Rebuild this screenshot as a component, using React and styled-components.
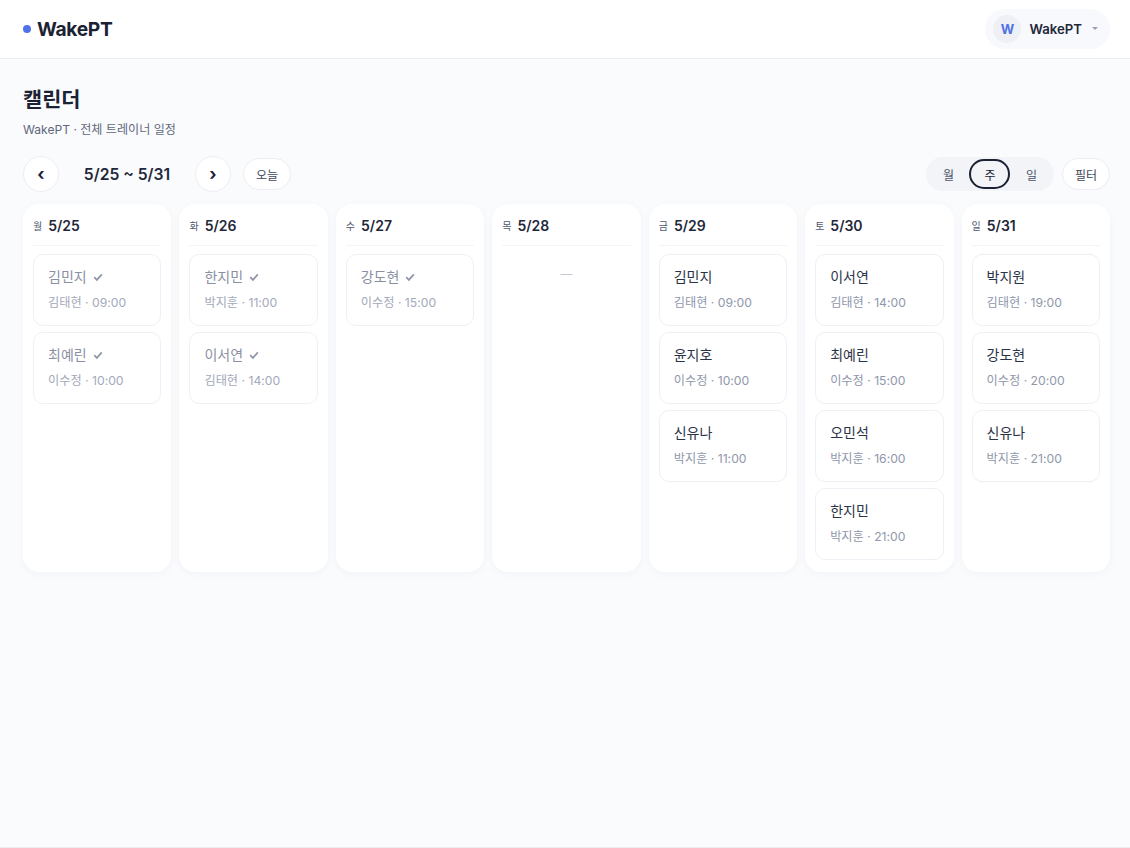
import React from "react";
import styled, { createGlobalStyle } from "styled-components";

const Global = createGlobalStyle`
  html, body { margin: 0; padding: 0; background: #fafbfd; }
  body { font-family: Inter, "Noto Sans CJK KR", sans-serif; color: #1a2233; }
  * { box-sizing: border-box; }
`;
const Page = styled.div`
  height: 848px; display: flex; flex-direction: column; background: #fafbfd;
  border-bottom: 1px solid #eceef3;
`;
const Header = styled.header`
  height: 59px; flex: none; background: #fff; border-bottom: 1px solid #eceef3;
  display: flex; align-items: center; justify-content: space-between; padding: 0 20px 0 23px;
`;
const Logo = styled.div`display: flex; align-items: center; gap: 6px; font-size: 19.2px; font-weight: 700; letter-spacing: -0.3px; color: #1a2233;`;
const Dot = styled.span`width: 8px; height: 8px; border-radius: 50%; background: #5073ea;`;
const User = styled.div`
  height: 40px; margin-top: -1px; padding: 0 12px 0 8px; border-radius: 20px; background: #f8f9fc;
  display: flex; align-items: center; gap: 8px; font-size: 13.2px; font-weight: 600; color: #1f283a;
`;
const Avatar = styled.span`
  width: 28px; height: 28px; border-radius: 50%; background: #eef0f6; color: #4f72e3;
  display: flex; align-items: center; justify-content: center; font-size: 13px; font-weight: 700;
`;
const Caret = styled.span`
  width: 0; height: 0; margin-left: 2px; border-left: 3px solid transparent; border-right: 3px solid transparent;
  border-top: 3px solid #9aa1b2;
`;
const Main = styled.main`flex: 1; padding: 25px 20px 0 23px;`;
const Title = styled.h1`margin: 0; font-size: 20.8px; line-height: 32px; font-weight: 700; color: #1a2233;`;
const Sub = styled.p`margin: 6px 0 0; font-size: 12.08px; line-height: 16px; color: #5f687c;`;
const Toolbar = styled.div`display: flex; align-items: center; justify-content: space-between; margin-top: 18px; height: 36px;`;
const Group = styled.div`display: flex; align-items: center;`;
const RoundBtn = styled.button`
  width: 36px; height: 36px; border-radius: 50%; border: 1px solid #eceef4; background: #fff; padding: 0;
  font: 700 17px Inter, sans-serif; color: #1a2233; display: flex; align-items: center; justify-content: center;
`;
const Range = styled.div`width: 136px; text-align: center; font-size: 15.7px; font-weight: 600; color: #1f283a;`;
const Pill = styled.button`
  height: 32px; padding: 0 12px; border-radius: 16px; border: 1px solid #eceef4; background: #fff;
  font: 400 12px Inter, "Noto Sans CJK KR", sans-serif; color: #3f485c; margin-left: ${p => p.$ml || 0}px;
`;
const Segment = styled.div`
  height: 34px; border-radius: 17px; background: #f2f4f8; padding: 2px 2px; display: flex; align-items: center; width: 128px;
  justify-content: space-between;
`;
const SegItem = styled.button`
  width: 41px; height: 30px; border-radius: 15px; background: transparent; padding: 0;
  border: ${p => p.$active ? "2px solid #1a2233" : "0"};
  font: 400 12px Inter, "Noto Sans CJK KR", sans-serif; color: ${p => p.$active ? "#1a2233" : "#4b5468"};
`;
const Grid = styled.div`display: grid; grid-template-columns: repeat(7, 1fr); gap: 8px; margin-top: 12px;`;
const Col = styled.section`
  background: #fff; border-radius: 16px; height: 368px; padding: 10px 10px 0;
  box-shadow: 0 2px 8px rgba(30, 40, 90, 0.035);
`;
const ColHead = styled.div`
  display: flex; align-items: center; gap: 6px; height: 32px; border-bottom: 1px solid #f3f4f8;
  margin-bottom: 8px; padding-bottom: 9px;
`;
const Dow = styled.span`font-size: 10px; font-weight: 400; color: #4f586c;`;
const DateText = styled.span`font-size: 14px; font-weight: 600; color: #1f283a;`;
const Card = styled.div`
  height: 72px; border: 1px solid #eef0f5; border-radius: 10px; background: #fff; padding: 0 14px 1px;
  margin-bottom: 6px; display: flex; flex-direction: column; justify-content: center; gap: 7px;
`;
const Name = styled.div`
  display: flex; align-items: center; gap: 6px; font-size: 14px; line-height: 20px; font-weight: 400;
  color: ${p => p.$done ? "#8a90a3" : "#2b3447"};
`;
const Meta = styled.div`font-size: 12.2px; line-height: 18px; color: ${p => p.$done ? "#a3a9bb" : "#9097ab"};`;
const Empty = styled.div`text-align: center; color: #c5c9d4; font-size: 12px; padding-top: 10px; line-height: 20px;`;

const Check = () => (
  <svg width="10" height="10" viewBox="0 0 10 10" fill="none" stroke="#8f95a8" strokeWidth="1.7">
    <path d="M1.2 5.2 L3.9 7.9 L8.8 2.4" />
  </svg>
);

const days = [
  ["월", "5/25", [["김민지", "김태현 · 09:00", 1], ["최예린", "이수정 · 10:00", 1]]],
  ["화", "5/26", [["한지민", "박지훈 · 11:00", 1], ["이서연", "김태현 · 14:00", 1]]],
  ["수", "5/27", [["강도현", "이수정 · 15:00", 1]]],
  ["목", "5/28", []],
  ["금", "5/29", [["김민지", "김태현 · 09:00"], ["윤지호", "이수정 · 10:00"], ["신유나", "박지훈 · 11:00"]]],
  ["토", "5/30", [["이서연", "김태현 · 14:00"], ["최예린", "이수정 · 15:00"], ["오민석", "박지훈 · 16:00"], ["한지민", "박지훈 · 21:00"]]],
  ["일", "5/31", [["박지원", "김태현 · 19:00"], ["강도현", "이수정 · 20:00"], ["신유나", "박지훈 · 21:00"]]],
];

export default function App() {
  return (
    <Page>
      <Global />
      <Header>
        <Logo><Dot />WakePT</Logo>
        <User><Avatar>W</Avatar>WakePT<Caret /></User>
      </Header>
      <Main>
        <Title>캘린더</Title>
        <Sub>WakePT · 전체 트레이너 일정</Sub>
        <Toolbar>
          <Group>
            <RoundBtn>‹</RoundBtn>
            <Range>5/25 ~ 5/31</Range>
            <RoundBtn>›</RoundBtn>
            <Pill $ml={12}>오늘</Pill>
          </Group>
          <Group>
            <Segment>
              <SegItem>월</SegItem>
              <SegItem $active>주</SegItem>
              <SegItem>일</SegItem>
            </Segment>
            <Pill $ml={8}>필터</Pill>
          </Group>
        </Toolbar>
        <Grid>
          {days.map(([d, date, items]) => (
            <Col key={date}>
              <ColHead><Dow>{d}</Dow><DateText>{date}</DateText></ColHead>
              {items.length === 0 && <Empty>—</Empty>}
              {items.map(([n, m, done]) => (
                <Card key={n + m}>
                  <Name $done={done}>{n}{done && <Check />}</Name>
                  <Meta $done={done}>{m}</Meta>
                </Card>
              ))}
            </Col>
          ))}
        </Grid>
      </Main>
    </Page>
  );
}
